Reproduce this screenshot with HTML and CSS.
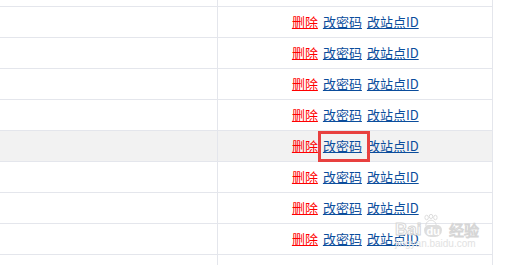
FILE: index.html
```html
<!DOCTYPE html>
<html>
<head>
<meta charset="utf-8">
<link rel="stylesheet" href="styles.css">
</head>
<body>
<div class="frame">
<div class="grid">
  <div class="row top"><div class="c1"></div><div class="c2"></div></div>
  <div class="row"><div class="c1"></div><div class="c2"><a class="del" href="#">删除</a><a href="#">改密码</a><a href="#">改站点ID</a></div></div>
  <div class="row"><div class="c1"></div><div class="c2"><a class="del" href="#">删除</a><a href="#">改密码</a><a href="#">改站点ID</a></div></div>
  <div class="row"><div class="c1"></div><div class="c2"><a class="del" href="#">删除</a><a href="#">改密码</a><a href="#">改站点ID</a></div></div>
  <div class="row"><div class="c1"></div><div class="c2"><a class="del" href="#">删除</a><a href="#">改密码</a><a href="#">改站点ID</a></div></div>
  <div class="row hl"><div class="c1"></div><div class="c2"><a class="del" href="#">删除</a><a class="boxed" href="#">改密码</a><a href="#">改站点ID</a></div></div>
  <div class="row"><div class="c1"></div><div class="c2"><a class="del" href="#">删除</a><a href="#">改密码</a><a href="#">改站点ID</a></div></div>
  <div class="row"><div class="c1"></div><div class="c2"><a class="del" href="#">删除</a><a href="#">改密码</a><a href="#">改站点ID</a></div></div>
  <div class="row"><div class="c1"></div><div class="c2"><a class="del" href="#">删除</a><a href="#">改密码</a><a href="#">改站点ID</a></div></div>
  <div class="row"><div class="c1"></div><div class="c2"></div></div>
</div>
</div>
<div class="wm">
  <div class="wm-top"><span class="wm-bai">Bai</span><svg class="paw" width="18" height="14" viewBox="0 0 20 16"><g fill="none" stroke="#d8d8d8" stroke-width="1"><ellipse cx="5" cy="4" rx="2" ry="2.6"/><ellipse cx="10" cy="2.8" rx="2" ry="2.4"/><ellipse cx="15" cy="4" rx="2" ry="2.6"/><path d="M4 13 C4 9 8 7 10 7 C12 7 16 9 16 13 C16 15.5 4 15.5 4 13 Z"/></g></svg><span class="wm-du">du</span><span class="wm-jy">经验</span></div>
  <div class="wm-url">jingyan.baidu.com</div>
</div>
</body>
</html>
```

FILE: styles.css
```css
html, body {
  margin: 0;
  padding: 0;
  background: #ffffff;
  overflow: hidden;
}
body {
  font-family: "Noto Sans CJK SC", "Liberation Sans", sans-serif;
  font-size: 13px;
  position: relative;
  width: 513px;
  height: 265px;
}
.frame {
  height: 265px;
  overflow: hidden;
}
.grid {
  width: 493px;
  margin-top: -24px;
}
.row {
  display: flex;
  height: 30px;
  border-bottom: 1px solid #e4e6ec;
}
.row.hl {
  background: #f2f2f2;
}
.c1 {
  width: 217px;
  border-right: 1px solid #e4e6ec;
}
.c2 {
  width: 274px;
  border-right: 1px solid #e4e6ec;
  display: flex;
  justify-content: center;
  align-items: center;
  gap: 5px;
  line-height: 16px;
  white-space: nowrap;
  padding-left: 1px;
}
.c2 a {
  color: #0b4d9c;
  text-decoration: underline;
}
.c2 a.del {
  color: #ff0000;
}
.boxed {
  position: relative;
}
.boxed::after {
  content: "";
  position: absolute;
  left: -5px;
  right: -8px;
  top: -7px;
  height: 31px;
  border: 3px solid #e8403f;
  box-sizing: border-box;
}
.wm {
  position: absolute;
  left: 395px;
  top: 211px;
  color: #dcdcdc;
  font-family: "Liberation Sans", sans-serif;
}
.wm-top {
  display: flex;
  align-items: flex-end;
  height: 26px;
}
.wm-bai {
  font-size: 17px;
  font-weight: bold;
  line-height: 15px;
  color: #ffffff;
  -webkit-text-stroke: 1px #d6d6d6;
}
.paw {
  margin: 0 0 9px 1px;
}
.wm-du {
  font-size: 11px;
  font-weight: bold;
  color: #ffffff;
  background: #dedede;
  border-radius: 5px 5px 7px 7px;
  padding: 0 2px;
  line-height: 12px;
  margin-left: -16px;
  margin-right: 7px;
}
.wm-jy {
  font-family: "Noto Sans CJK SC", sans-serif;
  font-size: 15px;
  line-height: 15px;
  color: #ffffff;
  -webkit-text-stroke: 1px #d6d6d6;
}
.wm-url {
  font-size: 10px;
  line-height: 10px;
  color: #e2e2e2;
  margin-top: 2px;
}
```
